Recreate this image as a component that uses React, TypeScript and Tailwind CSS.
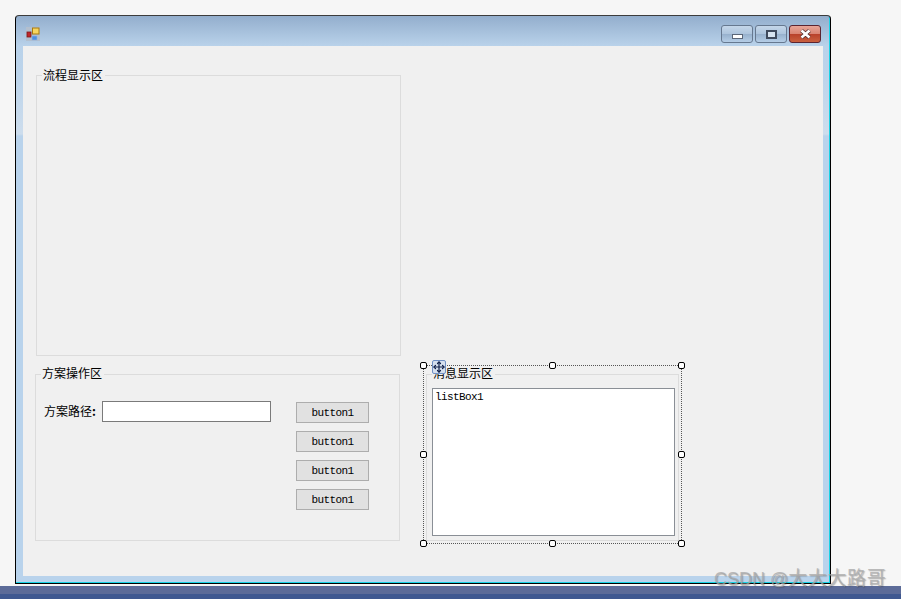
import { Move } from "lucide-react";

const cjk = "font-['Noto_Sans_CJK_SC','Liberation_Sans',sans-serif] text-[12px] leading-[14px] text-black";
const simFont = "font-['Liberation_Mono',monospace] text-[11px] leading-[12px] tracking-[-0.6px] text-black";

function GroupBox({ title, className, legendTop = "top-[-9px]", children }: { title: string; className: string; legendTop?: string; children?: React.ReactNode }) {
  return (
    <div className={`relative border border-[#dcdcdc] ${className}`}>
      <span className={`absolute left-[5px] bg-[#f0f0f0] pl-px pr-[2px] ${legendTop} ${cjk}`}>{title}</span>
      {children}
    </div>
  );
}

function CaptionButton({ children, danger }: { children: React.ReactNode; danger?: boolean }) {
  return (
    <div
      className={
        danger
          ? "flex h-[18px] w-[32px] items-center justify-center rounded-[3px] border border-[#5b2430] bg-[linear-gradient(180deg,#e8a598_0,#d98473_48%,#b8402a_50%,#c9603f_100%)]"
          : "flex h-[18px] w-[32px] items-center justify-center rounded-[3px] border border-[#66788f] bg-[linear-gradient(180deg,#c4d6e9_0,#aec5dd_48%,#96b0cc_50%,#b5cde6_100%)]"
      }
    >
      {children}
    </div>
  );
}

function Handle({ className }: { className: string }) {
  return <div className={`absolute h-[7px] w-[7px] rounded-[2px] border border-black bg-white ${className}`} />;
}

function DesignerButton() {
  return (
    <div className={`flex h-[21px] w-[73px] items-center justify-center border border-[#adadad] bg-[#e1e1e1] pt-px ${simFont}`}>
      button1
    </div>
  );
}

function FormIcon() {
  return (
    <svg width="14" height="14" viewBox="0 0 14 14" className="ml-[10px] mt-[11px] bg-[#b3bfce]">
      <rect x="1" y="5" width="4" height="5" fill="#c0262a" stroke="#7a1a1a" strokeWidth="0.8" />
      <rect x="6.5" y="1" width="6.5" height="6" fill="#f7d560" stroke="#a87a10" strokeWidth="1" />
      <rect x="6" y="9" width="5" height="4" fill="#4f8fe0" stroke="#8db4ea" strokeWidth="0.6" />
    </svg>
  );
}

export default function App() {
  return (
    <div className="relative flex h-[599px] w-[901px] flex-col overflow-hidden bg-[#f6f6f6]">
      <div className="ml-[15px] mt-[15px] flex h-[569px] w-[816px] flex-col rounded-t-[4px] border border-b-black border-l-black border-r-black border-t-[#3c3c3c] bg-[linear-gradient(180deg,#93aecd_0,#b9d2ea_30px,#bcd4eb_60px,#cddded_118px,#b9d3ec_120px)] shadow-[inset_-1px_-1px_0_#19d3e6]">
        <div className="flex h-[30px] shrink-0 items-start justify-between pr-[9px]">
          <FormIcon />
          <div className="mt-[9px] flex gap-[2px]">
            <CaptionButton>
              <div className="mt-[5px] h-[5px] w-[11px] border border-[#5a6678] bg-white" />
            </CaptionButton>
            <CaptionButton>
              <div className="h-[9px] w-[11px] border-2 border-[#3f4a5c] bg-[#d8e4f0]" />
            </CaptionButton>
            <CaptionButton danger>
              <svg width="13" height="10" viewBox="0 0 13 10">
                <path d="M2.5 1.5 L10.5 8.5 M10.5 1.5 L2.5 8.5" stroke="#4a2a2a" strokeWidth="4" />
                <path d="M2.5 1.5 L10.5 8.5 M10.5 1.5 L2.5 8.5" stroke="#fff" strokeWidth="2.6" />
              </svg>
            </CaptionButton>
          </div>
        </div>

        <div className="mx-[7px] flex h-[530px] w-[800px] items-start bg-[#f0f0f0] pl-[13px] pt-[29px]">
          <div className="flex w-[365px] flex-col">
            <GroupBox title="流程显示区" legendTop="top-[-8px]" className="h-[281px] w-[365px]" />
            <GroupBox title="方案操作区" className="-ml-px mt-[18px] flex h-[167px] w-[365px] items-start pl-[8px] pt-[26px]">
              <span className={`mt-[3px] w-[58px] shrink-0 ${cjk}`}>
                方案路径<span className="font-bold">:</span>
              </span>
              <div className="h-[21px] w-[169px] shrink-0 border border-[#7a7a7a] bg-white" />
              <div className="ml-[25px] mt-px flex flex-col gap-[8px]">
                <DesignerButton />
                <DesignerButton />
                <DesignerButton />
                <DesignerButton />
              </div>
            </GroupBox>
          </div>

          <div className="relative ml-[22px] mt-[290px] h-[179px] w-[259px] border border-dotted border-[#555] pl-[2px] pt-[8px]">
            <GroupBox title="消息显示区" className="h-[167px] w-[253px] pl-[5px] pt-[13px]">
              <div className={`h-[148px] w-[243px] border border-[#8a8f96] bg-white pl-[2px] pt-[2px] ${simFont}`}>
                listBox1
              </div>
            </GroupBox>
            <Handle className="left-[-4px] top-[-4px]" />
            <Handle className="left-[125px] top-[-4px]" />
            <Handle className="right-[-4px] top-[-4px]" />
            <Handle className="left-[-4px] top-[85px]" />
            <Handle className="right-[-4px] top-[85px]" />
            <Handle className="bottom-[-4px] left-[-4px]" />
            <Handle className="bottom-[-4px] left-[125px]" />
            <Handle className="bottom-[-4px] right-[-4px]" />
            <div className="absolute left-[8px] top-[-6px] flex h-[14px] w-[14px] items-center justify-center rounded-[2px] border border-[#6f8fc4] bg-[#d5dfee]">
              <Move size={12} strokeWidth={2.4} className="text-[#10204a]" />
            </div>
          </div>
        </div>
      </div>

      <div className="mt-[2px] h-[8px] w-full bg-[#5c6b98]" />
      <div className="h-[5px] w-full bg-[#3f5890]" />

      <div className="absolute left-[714px] top-[568px] whitespace-nowrap font-['Liberation_Sans','Noto_Sans_CJK_SC',sans-serif] text-[18px] leading-[22px] text-[#a8a8a8]/75 [text-shadow:1px_1px_1px_rgba(60,60,60,0.35)]">
        CSDN @<span className="text-[19px] tracking-[0.6px]">大大大路哥</span>
      </div>
    </div>
  );
}
